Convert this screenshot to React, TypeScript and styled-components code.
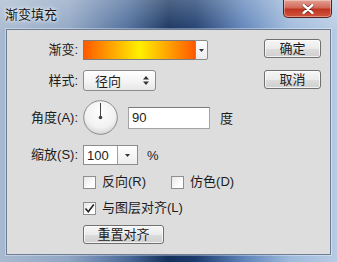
import React from "react";
import styled, { createGlobalStyle } from "styled-components";

const GlobalStyle = createGlobalStyle`
  html, body {
    margin: 0;
    padding: 0;
    background: #dddddd;
  }
  body {
    font-family: "Liberation Sans", "Noto Sans CJK SC", sans-serif;
    font-size: 13px;
    color: #1c1c1c;
  }
`;

const Window = styled.div`
  width: 337px;
  height: 262px;
  display: flex;
  flex-direction: column;
  overflow: hidden;
  background: linear-gradient(
    90deg,
    #a8b9d0 0%,
    #90a6c4 20%,
    #4a6a99 38%,
    #14305c 50%,
    #1c3b6d 58%,
    #5c82b8 72%,
    #9fbadc 86%,
    #b7cbe3 100%
  );
  position: relative;
`;

const TitleBar = styled.div`
  height: 29px;
  display: flex;
  justify-content: space-between;
  align-items: flex-start;
  background: linear-gradient(180deg, rgba(255, 255, 255, 0.25) 0%, rgba(255, 255, 255, 0.05) 100%);
`;

const Title = styled.div`
  padding: 7px 0 0 5px;
  font-size: 13px;
  line-height: 15px;
  color: #151515;
  text-shadow: 0 0 6px rgba(255, 255, 255, 0.9), 0 0 3px rgba(255, 255, 255, 0.9);
`;

const CloseButton = styled.div`
  width: 49px;
  height: 18px;
  margin-right: 5px;
  box-sizing: border-box;
  border: 1px solid #5a1f1a;
  border-top: none;
  border-radius: 0 0 5px 5px;
  background: linear-gradient(180deg, #e4a093 0%, #d36a59 45%, #bf3522 55%, #d2553f 100%);
  display: flex;
  align-items: center;
  justify-content: center;
  box-shadow: inset 0 0 0 1px rgba(255, 255, 255, 0.35);
`;

const Client = styled.div`
  flex: 1;
  margin: 0 6px 7px 6px;
  border: 1px solid #6d7d94;
  background: #dddddd;
  display: flex;
  box-shadow: 0 0 0 1px rgba(255, 255, 255, 0.35);
`;

const Form = styled.div`
  flex: 1;
  display: flex;
  flex-direction: column;
  padding-top: 10px;
`;

const Row = styled.div<{ $h: number; $gap: number }>`
  display: grid;
  grid-template-columns: 71px auto;
  column-gap: 5px;
  align-items: center;
  height: ${(p) => p.$h}px;
  margin-top: ${(p) => p.$gap}px;
`;

const Label = styled.div`
  text-align: right;
  white-space: nowrap;
  line-height: 16px;
`;

const Controls = styled.div<{ $gap?: number }>`
  display: flex;
  align-items: center;
  gap: ${(p) => p.$gap ?? 8}px;
`;

const Swatch = styled.div`
  width: 112px;
  height: 20px;
  box-sizing: border-box;
  border: 1px solid #7d7d7d;
  border-right: none;
  background: linear-gradient(90deg, #ff5a00 0%, #ffae00 28%, #fff000 50%, #ffae00 72%, #ff5a00 100%);
`;

const ArrowBox = styled.div`
  width: 13px;
  height: 20px;
  box-sizing: border-box;
  border: 1px solid #8a8a8a;
  border-radius: 0 2px 2px 0;
  background: linear-gradient(180deg, #ffffff 0%, #ececec 100%);
  display: flex;
  align-items: center;
  justify-content: center;
`;

const SelectBox = styled.div`
  width: 73px;
  height: 21px;
  box-sizing: border-box;
  border: 1px solid #8c8c8c;
  border-radius: 3px;
  background: linear-gradient(180deg, #ffffff 0%, #f3f3f3 60%, #e6e6e6 100%);
  display: flex;
  align-items: center;
  justify-content: space-between;
  padding: 0 6px 0 11px;
`;

const TextInput = styled.div<{ $w: number }>`
  width: ${(p) => p.$w}px;
  height: 22px;
  box-sizing: border-box;
  border: 1px solid #a3a3a3;
  border-top-color: #7a7a7a;
  background: #ffffff;
  display: flex;
  align-items: center;
  padding-left: 3px;
  font-size: 13px;
`;

const Combo = styled.div`
  width: 55px;
  height: 20px;
  box-sizing: border-box;
  border: 1px solid #8c8c8c;
  background: #ffffff;
  display: grid;
  grid-template-columns: 34px 1fr;
`;

const ComboText = styled.div`
  display: flex;
  align-items: center;
  padding-left: 3px;
  border-right: 1px solid #a0a0a0;
`;

const ComboArrow = styled.div`
  display: flex;
  align-items: center;
  justify-content: center;
  background: linear-gradient(180deg, #ffffff 0%, #ededed 100%);
`;

const Check = styled.label`
  display: flex;
  align-items: center;
  gap: 6px;
  white-space: nowrap;
  line-height: 14px;
`;

const Box = styled.span`
  width: 13px;
  height: 13px;
  box-sizing: border-box;
  border: 1px solid #8e8f8f;
  background: linear-gradient(135deg, #e6e6e6 0%, #ffffff 70%);
  display: flex;
  align-items: center;
  justify-content: center;
`;

const Button = styled.div<{ $w: number }>`
  width: ${(p) => p.$w}px;
  height: 19px;
  box-sizing: border-box;
  border: 1px solid #707070;
  border-radius: 3px;
  background: linear-gradient(180deg, #f6f6f6 0%, #ebebeb 50%, #dddddd 51%, #cfcfcf 100%);
  box-shadow: inset 0 0 0 1px rgba(255, 255, 255, 0.7);
  display: flex;
  align-items: center;
  justify-content: center;
  font-size: 13px;
  line-height: 15px;
`;

const Side = styled.div`
  display: flex;
  flex-direction: column;
  gap: 12px;
  padding: 9px 9px 0 0;
`;

const Down = () => (
  <svg width="5" height="3" viewBox="0 0 5 3">
    <path d="M0 0 H5 L2.5 3 Z" fill="#333" />
  </svg>
);

const UpDown = () => (
  <svg width="6" height="9" viewBox="0 0 6 9">
    <path d="M0 3.5 L3 0 L6 3.5 Z" fill="#333" />
    <path d="M0 5.5 L3 9 L6 5.5 Z" fill="#333" />
  </svg>
);

const Dial = () => (
  <svg width="35" height="35" viewBox="0 0 35 35">
    <defs>
      <radialGradient id="dialFill" cx="0.5" cy="0.35" r="0.65">
        <stop offset="0" stopColor="#ffffff" />
        <stop offset="0.7" stopColor="#f1f1f1" />
        <stop offset="1" stopColor="#d6d6d6" />
      </radialGradient>
    </defs>
    <circle cx="17.5" cy="17.5" r="16.8" fill="url(#dialFill)" stroke="#8b8b8b" strokeWidth="1" />
    <line x1="17.5" y1="17.5" x2="17.5" y2="3" stroke="#444" strokeWidth="1" />
    <circle cx="17.5" cy="17.5" r="1.8" fill="#444" />
  </svg>
);

const Tick = () => (
  <svg width="11" height="11" viewBox="0 0 11 11">
    <path d="M1.5 5.5 L4.3 8.8 L9.8 1.5" fill="none" stroke="#222" strokeWidth="1.6" />
  </svg>
);

const CloseX = () => (
  <svg width="12" height="10" viewBox="0 0 12 10">
    <path d="M1.5 1 L10.5 9 M10.5 1 L1.5 9" stroke="#5b1e16" strokeWidth="3.6" strokeLinecap="round" />
    <path d="M1.5 1 L10.5 9 M10.5 1 L1.5 9" stroke="#ffffff" strokeWidth="2.4" strokeLinecap="round" />
  </svg>
);

export default function App() {
  return (
    <>
      <GlobalStyle />
      <Window>
        <TitleBar>
          <Title>渐变填充</Title>
          <CloseButton>
            <CloseX />
          </CloseButton>
        </TitleBar>
        <Client>
          <Form>
            <Row $h={20} $gap={0}>
              <Label>渐变:</Label>
              <Controls $gap={0}>
                <Swatch />
                <ArrowBox>
                  <Down />
                </ArrowBox>
              </Controls>
            </Row>
            <Row $h={21} $gap={10}>
              <Label>样式:</Label>
              <Controls>
                <SelectBox>
                  <span>径向</span>
                  <UpDown />
                </SelectBox>
              </Controls>
            </Row>
            <Row $h={35} $gap={9}>
              <Label>角度(A):</Label>
              <Controls $gap={10}>
                <Dial />
                <TextInput $w={82}>90</TextInput>
                <span>度</span>
              </Controls>
            </Row>
            <Row $h={20} $gap={10}>
              <Label>缩放(S):</Label>
              <Controls $gap={9}>
                <Combo>
                  <ComboText>100</ComboText>
                  <ComboArrow>
                    <Down />
                  </ComboArrow>
                </Combo>
                <span>%</span>
              </Controls>
            </Row>
            <Row $h={14} $gap={10}>
              <Label />
              <Controls $gap={25}>
                <Check>
                  <Box />
                  反向(R)
                </Check>
                <Check>
                  <Box />
                  仿色(D)
                </Check>
              </Controls>
            </Row>
            <Row $h={14} $gap={12}>
              <Label />
              <Controls>
                <Check>
                  <Box>
                    <Tick />
                  </Box>
                  与图层对齐(L)
                </Check>
              </Controls>
            </Row>
            <Row $h={19} $gap={10}>
              <Label />
              <Controls>
                <Button $w={81}>重置对齐</Button>
              </Controls>
            </Row>
          </Form>
          <Side>
            <Button $w={57}>确定</Button>
            <Button $w={57}>取消</Button>
          </Side>
        </Client>
      </Window>
    </>
  );
}
